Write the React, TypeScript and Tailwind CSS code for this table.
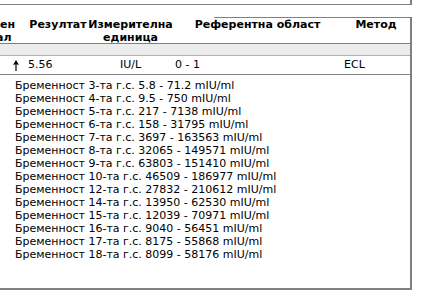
const ranges = [
  "Бременност 3-та г.с. 5.8 - 71.2 mIU/ml",
  "Бременност 4-та г.с. 9.5 - 750 mIU/ml",
  "Бременност 5-та г.с. 217 - 7138 mIU/ml",
  "Бременност 6-та г.с. 158 - 31795 mIU/ml",
  "Бременност 7-та г.с. 3697 - 163563 mIU/ml",
  "Бременност 8-та г.с. 32065 - 149571 mIU/ml",
  "Бременност 9-та г.с. 63803 - 151410 mIU/ml",
  "Бременност 10-та г.с. 46509 - 186977 mIU/ml",
  "Бременност 12-та г.с. 27832 - 210612 mIU/ml",
  "Бременност 14-та г.с. 13950 - 62530 mIU/ml",
  "Бременност 15-та г.с. 12039 - 70971 mIU/ml",
  "Бременност 16-та г.с. 9040 - 56451 mIU/ml",
  "Бременност 17-та г.с. 8175 - 55868 mIU/ml",
  "Бременност 18-та г.с. 8099 - 58176 mIU/ml",
];

function ArrowUp() {
  return (
    <svg width="6" height="11" viewBox="0 0 6 11" className="block">
      <path d="M3 0 L6 5 L3.6 4.2 L3.6 11 L2.4 11 L2.4 4.2 L0 5 Z" fill="#000" />
    </svg>
  );
}

export default function App() {
  return (
    <div className="w-[428px] h-[296px] bg-white text-black text-[11px] font-['Verdana','DejaVu_Sans',sans-serif]">
      <div className="w-[412px]">
        {/* top panel edge */}
        <div className="h-[5px] border-r-2 border-b border-[#808080]" />
        <div className="h-[12px]" />

        {/* results table */}
        <div className="border-r-2 border-b-2 border-[#808080] h-[273px] flex flex-col">
          <div className="h-px ml-[214px] bg-[#808080]" />
          <div className="flex h-[26px] font-bold leading-[13px] border-b border-[#808080]">
            <div className="w-[28px] overflow-hidden">
              <div>ен</div>
              <div className="-ml-[4px]">ал</div>
            </div>
            <div className="w-[60px] text-center">Резултат</div>
            <div className="w-[85px] text-center">
              <div>Измерителна</div>
              <div>единица</div>
            </div>
            <div className="w-[169px] text-center">Референтна област</div>
            <div className="flex-1 text-center">Метод</div>
          </div>
          <div className="h-[12px] bg-[#ececec] border-b border-[#b0b0b0]" />
          <div className="flex h-[19px] items-center border-b border-[#808080]">
            <div className="w-[28px] flex justify-end pr-[9px]">
              <ArrowUp />
            </div>
            <div className="w-[60px]">5.56</div>
            <div className="w-[85px] text-center">IU/L</div>
            <div className="w-[169px] pl-[2px]">0 - 1</div>
            <div className="flex-1 pl-[2px]">ECL</div>
          </div>
          <div className="pt-[4px] pl-[15px] leading-[13px]">
            {ranges.map((r) => (
              <div key={r}>{r}</div>
            ))}
          </div>
        </div>
      </div>
    </div>
  );
}
